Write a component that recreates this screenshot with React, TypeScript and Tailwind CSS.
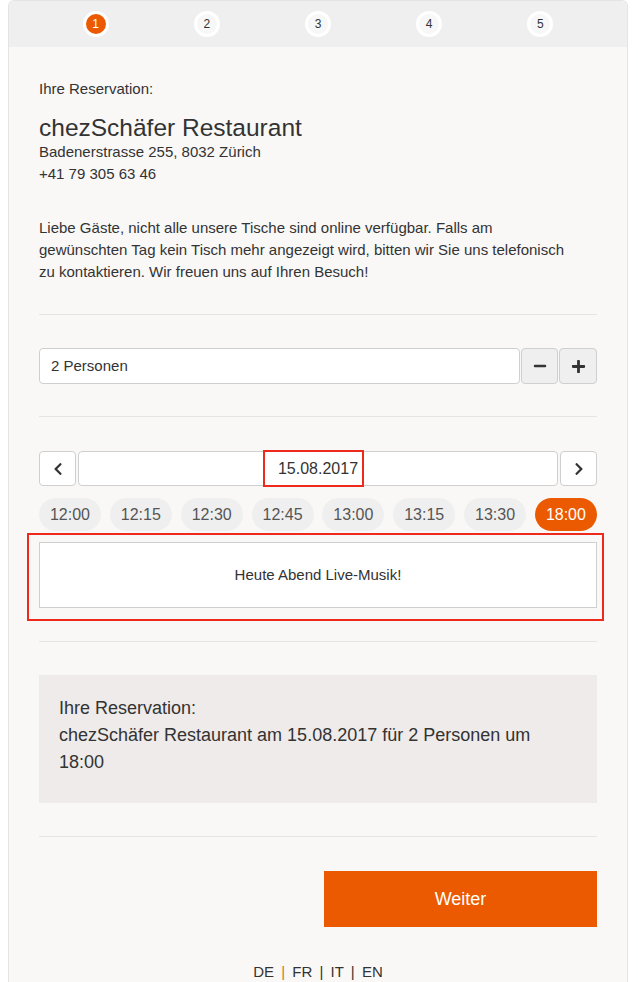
import React from 'react';
import { FaMinus, FaPlus, FaChevronLeft, FaChevronRight } from 'react-icons/fa';

const times = ['12:00', '12:15', '12:30', '12:45', '13:00', '13:15', '13:30', '18:00'];

function Divider() {
  return <div className="h-px w-full bg-[#e6e5e4]" />;
}

export default function App() {
  const active = '18:00';

  return (
    <div className="min-h-[982px] bg-white font-['Liberation_Sans',Arial,sans-serif] text-[#333]">
      <div className="ml-2 w-[620px] min-h-[982px] rounded-t-md border-x border-t border-[#e4e4e4] bg-[#f9f8f7]">
        {/* Schritte */}
        <div className="flex h-[46px] items-center rounded-t-md bg-[#efefef] px-[31px]">
          {[1, 2, 3, 4, 5].map((n) => (
            <div key={n} className="flex flex-1 justify-center">
              <div
                className={
                  n === 1
                    ? 'flex h-[26px] w-[26px] items-center justify-center rounded-full border-[3px] border-white bg-[#eb5a00] text-[12px] text-white'
                    : 'flex h-[26px] w-[26px] items-center justify-center rounded-full border-[3px] border-white bg-[#f7f7f7] text-[12px] text-[#333]'
                }
              >
                {n}
              </div>
            </div>
          ))}
        </div>

        <div className="px-[30px] pt-[31px]">
          <p className="text-[15px] leading-[22px]">Ihre Reservation:</p>
          <h1 className="mt-[14px] text-[24.5px] leading-[27px]">chezSchäfer Restaurant</h1>
          <p className="text-[15px] leading-[22px]">Badenerstrasse 255, 8032 Zürich</p>
          <p className="text-[15px] leading-[22px]">+41 79 305 63 46</p>

          <p className="mt-[32px] text-[15px] leading-[22px]">
            Liebe Gäste, nicht alle unsere Tische sind online verfügbar. Falls am
            <br />
            gewünschten Tag kein Tisch mehr angezeigt wird, bitten wir Sie uns telefonisch
            <br />
            zu kontaktieren. Wir freuen uns auf Ihren Besuch!
          </p>

          <div className="mt-[31px]">
            <Divider />
          </div>

          {/* Personen */}
          <div className="mt-[33px] flex h-[36px] gap-px">
            <div className="flex flex-1 items-center rounded-[4px] border border-[#cfcfcf] bg-white px-[11px] text-[15px]">
              2 Personen
            </div>
            <button className="flex w-[37px] items-center justify-center rounded-[4px] border border-[#cfcfcf] bg-[#efefef] text-[#333]">
              <FaMinus size={14} />
            </button>
            <button className="flex w-[38px] items-center justify-center rounded-[4px] border border-[#cfcfcf] bg-[#efefef] text-[#333]">
              <FaPlus size={15} />
            </button>
          </div>

          <div className="mt-[32px]">
            <Divider />
          </div>

          {/* Datum */}
          <div className="mt-[34px] flex h-[35px] gap-[2px]">
            <button className="flex w-[37px] items-center justify-center rounded-[4px] border border-[#cfcfcf] bg-white text-[#333]">
              <FaChevronLeft size={14} />
            </button>
            <div className="relative flex flex-1 items-center justify-center rounded-[4px] border border-[#cfcfcf] bg-white text-[16px]">
              <span>15.08.2017</span>
              <div className="pointer-events-none absolute -top-[2px] left-[184px] h-[37px] w-[101px] border-2 border-[#ee2a1c]" />
            </div>
            <button className="flex w-[37px] items-center justify-center rounded-[4px] border border-[#cfcfcf] bg-white text-[#333]">
              <FaChevronRight size={14} />
            </button>
          </div>

          {/* Zeiten */}
          <div className="mt-[12px] flex justify-between">
            {times.map((t) => (
              <div
                key={t}
                className={
                  t === active
                    ? 'flex h-[33px] w-[62px] items-center justify-center rounded-full bg-[#eb5a00] text-[16px] text-white'
                    : 'flex h-[33px] w-[62px] items-center justify-center rounded-full bg-[#efefef] text-[16px] text-[#555]'
                }
              >
                {t}
              </div>
            ))}
          </div>

          <div className="relative mt-[11px]">
            <div className="flex h-[66px] items-center justify-center border border-[#cfcfcf] bg-white text-[15px]">
              Heute Abend Live-Musik!
            </div>
            <div className="pointer-events-none absolute -bottom-[13px] -left-[12px] -right-[7px] -top-[9px] border-2 border-[#ee2a1c]" />
          </div>

          <div className="mt-[33px]">
            <Divider />
          </div>

          {/* Zusammenfassung */}
          <div className="mt-[33px] bg-[#eeebea] px-[20px] pb-[27px] pt-[20px] text-[18px] leading-[27px]">
            <p>Ihre Reservation:</p>
            <p>chezSchäfer Restaurant am 15.08.2017 für 2 Personen um 18:00</p>
          </div>

          <div className="mt-[33px]">
            <Divider />
          </div>

          <div className="mt-[34px] flex justify-end">
            <button className="h-[56px] w-[273px] bg-[#eb5a00] text-[18px] text-white">Weiter</button>
          </div>

          <div className="mt-[34px] text-center text-[15px] leading-[22px] text-[#333]">
            DE <span className="mx-[3px] text-[#c9762c]">|</span> FR <span className="mx-[3px]">|</span> IT{' '}
            <span className="mx-[3px]">|</span> EN
          </div>
        </div>
      </div>
    </div>
  );
}
